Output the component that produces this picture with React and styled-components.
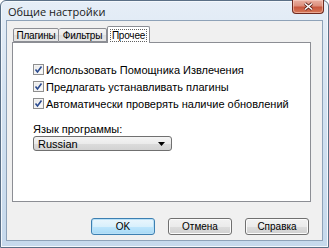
import React from "react";
import { useState } from "react";
import styled, { createGlobalStyle } from "styled-components";

const GlobalStyle = createGlobalStyle`
  html, body {
    margin: 0;
    padding: 0;
    background: #ffffff;
  }
  body {
    font-family: "Liberation Sans", Arial, sans-serif;
    font-size: 11px;
    color: #000000;
  }
`;

const Window = styled.div`
  box-sizing: border-box;
  width: 329px;
  height: 248px;
  display: flex;
  flex-direction: column;
  border: 1px solid #5a6f86;
  border-radius: 6px 6px 0 0;
  background: linear-gradient(180deg, #e6eef7 0%, #d3e2f1 40%, #c6d9ec 100%);
  box-shadow: inset 0 0 0 1px #f4f8fc;
`;

const TitleBar = styled.div`
  height: 19px;
  display: flex;
  align-items: flex-start;
  justify-content: space-between;
`;

const Title = styled.div`
  padding: 4px 0 0 7px;
  font-family: "Open Sans", "Liberation Sans", sans-serif;
  font-size: 11px;
  line-height: 14px;
  color: #1a1a1a;
`;

const CloseButton = styled.div`
  box-sizing: border-box;
  width: 32px;
  height: 14px;
  margin: -1px 4px 0 0;
  display: flex;
  align-items: center;
  justify-content: center;
  border: 1px solid #6e2a20;
  border-top: none;
  border-radius: 0 0 4px 4px;
  background: linear-gradient(180deg, #eab0a2 0%, #dc8f7c 45%, #c8563d 55%, #d67a5a 100%);
  box-shadow: inset 0 0 0 1px rgba(255, 220, 210, 0.5);
`;

const Client = styled.div`
  box-sizing: border-box;
  flex: 1;
  margin: 0 5px 6px 5px;
  display: flex;
  flex-direction: column;
  border: 1px solid #8ea2b8;
  background: #f0f0f0;
  padding: 6px 11px 0 5px;
`;

const TabRow = styled.div`
  display: flex;
  align-items: flex-end;
  height: 15px;
  padding-left: 1px;
  position: relative;
  z-index: 1;
`;

const Tab = styled.div`
  box-sizing: border-box;
  width: ${(p) => p.$w}px;
  height: ${(p) => (p.$active ? "17px" : "14px")};
  margin-bottom: ${(p) => (p.$active ? "-1px" : "0")};
  display: flex;
  justify-content: center;
  padding-top: ${(p) => (p.$active ? "2px" : "1px")};
  border: 1px solid #8c8e94;
  border-bottom: ${(p) => (p.$active ? "none" : "1px solid #8c8e94")};
  border-left: ${(p) => (p.$first || p.$active ? "1px solid #8c8e94" : "none")};
  border-radius: 2px 2px 0 0;
  background: ${(p) =>
    p.$active
      ? "#ffffff"
      : "linear-gradient(180deg, #f3f3f3 0%, #ebebeb 50%, #dedede 51%, #e6e6e6 100%)"};
  font-size: 10px;
  letter-spacing: -0.2px;
  line-height: 12px;
  white-space: nowrap;
`;

const FocusText = styled.span`
  display: inline-block;
  height: 11px;
  padding: 0 1px;
  border: 1px dotted #606060;
  line-height: 11px;
`;

const Panel = styled.div`
  box-sizing: border-box;
  height: 160px;
  border: 1px solid #8c8e94;
  background: #ffffff;
  padding: 20px 0 0 20px;
  display: flex;
  flex-direction: column;
`;

const CheckRow = styled.label`
  display: flex;
  align-items: center;
  gap: 2px;
  height: 13px;
  margin-bottom: 4px;
  cursor: default;
`;

const Box = styled.span`
  box-sizing: border-box;
  width: 11px;
  height: 11px;
  display: flex;
  align-items: center;
  justify-content: center;
  border: 1px solid #8f8f8f;
  background: linear-gradient(135deg, #e6e6e6 0%, #ffffff 100%);
  box-shadow: inset 0 0 0 1px #f4f4f4;
`;

const FieldLabel = styled.div`
  margin-top: 9px;
  line-height: 12px;
`;

const Select = styled.div`
  box-sizing: border-box;
  width: 139px;
  height: 15px;
  margin-top: 1px;
  display: flex;
  align-items: center;
  justify-content: space-between;
  padding: 0 6px 0 4px;
  border: 1px solid #707070;
  border-radius: 3px;
  background: linear-gradient(180deg, #f4f4f4 0%, #ebebeb 50%, #dcdcdc 51%, #d2d2d2 100%);
`;

const ButtonRow = styled.div`
  display: flex;
  justify-content: flex-end;
  gap: 13px;
  margin-top: 16px;
  padding-right: 2px;
`;

const Button = styled.div`
  box-sizing: border-box;
  width: 64px;
  height: 17px;
  display: flex;
  align-items: center;
  justify-content: center;
  font-size: 10px;
  border: 1px solid ${(p) => (p.$default ? "#3c7fb1" : "#707070")};
  border-radius: 3px;
  background: ${(p) =>
    p.$default
      ? "linear-gradient(180deg, #eaf6fd 0%, #d9f0fc 50%, #bee6fd 51%, #a7d9f5 100%)"
      : "linear-gradient(180deg, #f2f2f2 0%, #ebebeb 50%, #dddddd 51%, #cfcfcf 100%)"};
  box-shadow: inset 0 0 0 1px ${(p) => (p.$default ? "#b8e0f7" : "#fbfbfb")};
`;

function Check() {
  return (
    <svg width="9" height="9" viewBox="0 0 9 9">
      <path d="M1.5 4.5 L3.5 7 L7.5 1.5" fill="none" stroke="#2a4a8f" strokeWidth="1.6" />
    </svg>
  );
}

const options = [
  "Использовать Помощника Извлечения",
  "Предлагать устанавливать плагины",
  "Автоматически проверять наличие обновлений",
];

const tabs = [
  { label: "Плагины", w: 46 },
  { label: "Фильтры", w: 48 },
  { label: "Прочее", w: 43 },
];

export default function App() {
  const [tab] = useState(2);
  return (
    <>
      <GlobalStyle />
      <Window>
        <TitleBar>
          <Title>Общие настройки</Title>
          <CloseButton>
            <svg width="11" height="9" viewBox="0 0 11 9">
              <path d="M2 1.5 L9 7.5 M9 1.5 L2 7.5" stroke="#5a2018" strokeWidth="3" />
              <path d="M2 1.5 L9 7.5 M9 1.5 L2 7.5" stroke="#ffffff" strokeWidth="1.6" />
            </svg>
          </CloseButton>
        </TitleBar>
        <Client>
          <TabRow>
            {tabs.map((t, i) => (
              <Tab key={t.label} $w={t.w} $active={i === tab} $first={i === 0}>
                {i === tab ? <FocusText>{t.label}</FocusText> : t.label}
              </Tab>
            ))}
          </TabRow>
          <Panel>
            {options.map((o) => (
              <CheckRow key={o}>
                <Box>
                  <Check />
                </Box>
                {o}
              </CheckRow>
            ))}
            <FieldLabel>Язык программы:</FieldLabel>
            <Select>
              <span>Russian</span>
              <svg width="7" height="4" viewBox="0 0 7 4">
                <path d="M0 0 H7 L3.5 4 Z" fill="#000000" />
              </svg>
            </Select>
          </Panel>
          <ButtonRow>
            <Button $default>OK</Button>
            <Button>Отмена</Button>
            <Button>Справка</Button>
          </ButtonRow>
        </Client>
      </Window>
    </>
  );
}
